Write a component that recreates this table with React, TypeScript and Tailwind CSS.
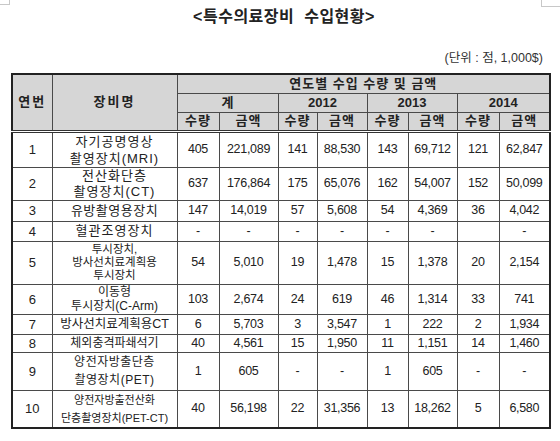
import React from "react";

type Row = {
  no: string;
  name: string[];
  nameCls: string;
  h: string;
  vals: string[];
};

const rows: Row[] = [
  { no: "1", name: ["자기공명영상", "촬영장치(MRI)"], nameCls: "text-[13px] leading-[17px] tracking-[1px]", h: "h-[36px]", vals: ["405", "221,089", "141", "88,530", "143", "69,712", "121", "62,847"] },
  { no: "2", name: ["전산화단층", "촬영장치(CT)"], nameCls: "text-[13px] leading-[16px] tracking-[1px]", h: "h-[33px]", vals: ["637", "176,864", "175", "65,076", "162", "54,007", "152", "50,099"] },
  { no: "3", name: ["유방촬영용장치"], nameCls: "text-[13px] leading-[16px] tracking-[0.5px]", h: "h-[21px]", vals: ["147", "14,019", "57", "5,608", "54", "4,369", "36", "4,042"] },
  { no: "4", name: ["혈관조영장치"], nameCls: "text-[13px] leading-[16px] tracking-[1px]", h: "h-[20px]", vals: ["-", "-", "-", "-", "-", "-", "", "-"] },
  { no: "5", name: ["투시장치,", "방사선치료계획용", "투시장치"], nameCls: "text-[11.5px] leading-[13px]", h: "h-[43px]", vals: ["54", "5,010", "19", "1,478", "15", "1,378", "20", "2,154"] },
  { no: "6", name: ["이동형", "투시장치(C-Arm)"], nameCls: "text-[12px] leading-[14px]", h: "h-[30px]", vals: ["103", "2,674", "24", "619", "46", "1,314", "33", "741"] },
  { no: "7", name: ["방사선치료계획용CT"], nameCls: "text-[12.5px] leading-[15px]", h: "h-[20px]", vals: ["6", "5,703", "3", "3,547", "1", "222", "2", "1,934"] },
  { no: "8", name: ["체외충격파쇄석기"], nameCls: "text-[12px] leading-[15px]", h: "h-[18px]", vals: ["40", "4,561", "15", "1,950", "11", "1,151", "14", "1,460"] },
  { no: "9", name: ["양전자방출단층", "촬영장치(PET)"], nameCls: "text-[12px] leading-[18px] tracking-[0.5px]", h: "h-[38px]", vals: ["1", "605", "-", "-", "1", "605", "-", "-"] },
  { no: "10", name: ["양전자방출전산화", "단층촬영장치(PET-CT)"], nameCls: "text-[11px] leading-[18px]", h: "h-[38px]", vals: ["40", "56,198", "22", "31,356", "13", "18,262", "5", "6,580"] },
];

const cell = "border border-[#4a4a4a] text-center align-middle p-0";
const head = "border border-[#4a4a4a] text-center align-middle p-0 bg-[#d6d6d6] font-bold text-[13px] leading-[16px]";

export default function App() {
  return (
    <div className="w-[560px] h-[441px] bg-white text-[#222] font-['Liberation_Sans','Noto_Sans_CJK_KR',sans-serif]">
      {/* crop marks */}
      <div className="flex justify-between items-start h-0 overflow-visible">
        <div className="w-[10px] h-[5px] border-r border-b border-[#c8c8c8]" />
        <div className="w-[19px] h-[7px] border-l border-b border-[#c8c8c8]" />
      </div>

      <div className="pt-[7px] pl-[8px] text-center text-[16px] leading-[20px] font-bold tracking-[0.5px]">
        &lt;특수의료장비&nbsp; 수입현황&gt;
      </div>

      <div className="mt-[23px] pr-[17px] text-right text-[12.5px] leading-[16px] text-[#333]">
        (단위 : 점, 1,000$)
      </div>

      <table className="mt-[7px] ml-[11px] w-[538px] table-fixed border-collapse border-2 border-[#222]">
        <colgroup>
          <col className="w-[40px]" />
          <col className="w-[125px]" />
          <col className="w-[42px]" />
          <col className="w-[59px]" />
          <col className="w-[39px]" />
          <col className="w-[50px]" />
          <col className="w-[41px]" />
          <col className="w-[49px]" />
          <col className="w-[42px]" />
          <col className="w-[51px]" />
        </colgroup>
        <thead>
          <tr className="h-[19px]">
            <td rowSpan={3} className={`${head} border-b-[3px] border-b-[#333] border-double tracking-[2px]`}>
              연번
            </td>
            <td rowSpan={3} className={`${head} border-b-[3px] border-b-[#333] border-double tracking-[2px]`}>
              장비명
            </td>
            <td colSpan={8} className={`${head} tracking-[1px]`}>
              연도별 수입 수량 및 금액
            </td>
          </tr>
          <tr className="h-[19px]">
            <td colSpan={2} className={head}>계</td>
            <td colSpan={2} className={head}>2012</td>
            <td colSpan={2} className={head}>2013</td>
            <td colSpan={2} className={head}>2014</td>
          </tr>
          <tr className="h-[19px]">
            {["수량", "금액", "수량", "금액", "수량", "금액", "수량", "금액"].map((t, i) => (
              <td key={i} className={`${head} border-b-[3px] border-b-[#333] border-double tracking-[1px]`}>
                {t}
              </td>
            ))}
          </tr>
        </thead>
        <tbody>
          {rows.map((r) => (
            <tr key={r.no} className={r.h}>
              <td className={`${cell} text-[13px] leading-[15px]`}>{r.no}</td>
              <td className={`${cell} ${r.nameCls}`}>
                {r.name.map((n, i) => (
                  <div key={i}>{n}</div>
                ))}
              </td>
              {r.vals.map((v, i) => (
                <td key={i} className={`${cell} text-[12.5px] leading-[15px] tracking-[-0.3px]`}>
                  {v}
                </td>
              ))}
            </tr>
          ))}
        </tbody>
      </table>
    </div>
  );
}
